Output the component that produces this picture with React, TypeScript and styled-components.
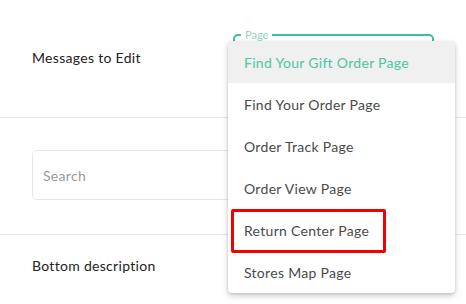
import styled, { createGlobalStyle } from "styled-components";

const GlobalStyle = createGlobalStyle`
  html, body {
    margin: 0;
    padding: 0;
    background: #ffffff;
  }
  body {
    font-family: "Lato", "Noto Sans", sans-serif;
    color: #1f1f1f;
    letter-spacing: 0.3px;
    overflow: hidden;
  }
`;

const Page = styled.div`
  position: relative;
  width: 466px;
  height: 304px;
  background: #fff;
`;

const Row = styled.div<{ $height: number; $divider?: boolean }>`
  display: grid;
  grid-template-columns: 201px 201px;
  align-items: center;
  box-sizing: border-box;
  height: ${(p) => p.$height}px;
  padding: 0 32px 2px;
  border-bottom: ${(p) => (p.$divider ? "1px solid #e3e5ea" : "none")};
`;

const FullRow = styled(Row)`
  grid-template-columns: 1fr;
`;

const Label = styled.div`
  font-size: 14px;
  color: #222;
`;

const SelectBox = styled.div`
  position: relative;
  height: 48px;
  border: 2px solid #3dbf9f;
  border-radius: 5px;
  box-sizing: border-box;
`;

const SelectLabel = styled.span`
  position: absolute;
  top: -8px;
  left: 6px;
  padding: 0 4px;
  background: #fff;
  font-size: 11px;
  line-height: 13px;
  letter-spacing: 0;
  color: #8fd6c2;
`;

const SearchInput = styled.div`
  height: 50px;
  border: 1px solid #e6e7ea;
  border-radius: 5px;
  box-sizing: border-box;
  display: flex;
  align-items: center;
  padding-left: 10px;
  font-size: 14px;
  color: #9a9a9a;
`;

const Menu = styled.ul`
  position: absolute;
  left: 228px;
  top: 41px;
  width: 227px;
  margin: 0;
  padding: 0;
  list-style: none;
  background: #fff;
  border-radius: 4px;
  box-shadow: 0 3px 6px rgba(0, 0, 0, 0.18), 0 1px 3px rgba(0, 0, 0, 0.12);
`;

const MenuItem = styled.li<{ $active?: boolean; $marked?: boolean }>`
  position: relative;
  height: 42px;
  display: flex;
  align-items: center;
  padding-left: 16px;
  font-size: 14px;
  color: ${(p) => (p.$active ? "#4cc6a6" : "#4a4a4a")};
  background: ${(p) => (p.$active ? "#f0f0f0" : "transparent")};

  ${(p) =>
    p.$marked &&
    `
    &::after {
      content: "";
      position: absolute;
      left: 3px;
      top: 0;
      width: 155px;
      height: 44px;
      box-sizing: border-box;
      border: 3px solid #f50000;
      border-radius: 2px;
    }
  `}
`;

const pages = [
  "Find Your Gift Order Page",
  "Find Your Order Page",
  "Order Track Page",
  "Order View Page",
  "Return Center Page",
  "Stores Map Page",
];

export default function App() {
  return (
    <>
      <GlobalStyle />
      <Page>
        <Row $height={118} $divider>
          <Label>Messages to Edit</Label>
          <SelectBox>
            <SelectLabel>Page</SelectLabel>
          </SelectBox>
        </Row>
        <FullRow $height={117} $divider>
          <SearchInput>Search</SearchInput>
        </FullRow>
        <Row $height={63}>
          <Label>Bottom description</Label>
        </Row>
        <Menu>
          {pages.map((name, i) => (
            <MenuItem key={name} $active={i === 0} $marked={i === 4}>
              {name}
            </MenuItem>
          ))}
        </Menu>
      </Page>
    </>
  );
}
